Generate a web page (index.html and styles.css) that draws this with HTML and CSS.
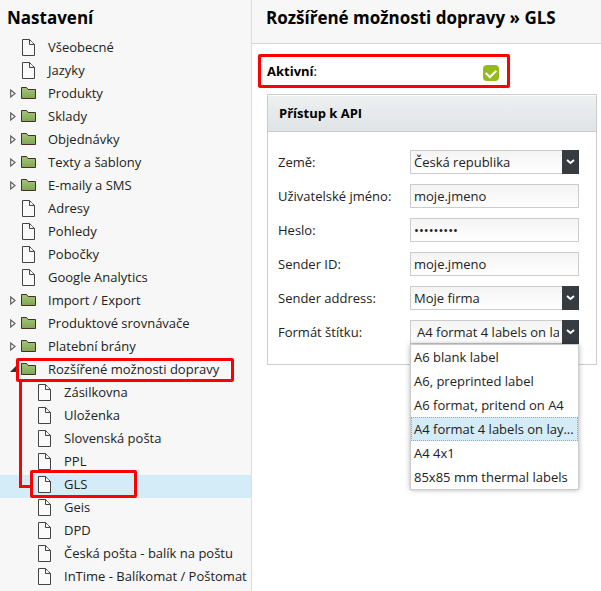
FILE: index.html
```
<!DOCTYPE html>
<html lang="cs">
<head>
<meta charset="utf-8">
<title>Rozšířené možnosti dopravy » GLS</title>
<link rel="stylesheet" href="styles.css">
</head>
<body>
<svg class="sprite" aria-hidden="true">
  <symbol id="file" viewBox="0 0 13 17"><path d="M.5.5h7l5 5v11H.5z" fill="#fafafa" stroke="#444"/><path d="M7.5.5v5h5" fill="none" stroke="#444"/><path d="M9 2.500v1.500h1.500" fill="none" stroke="#fff"/></symbol>
  <symbol id="folder" viewBox="0 0 15 12"><path d="M.5 11.500V.5h5l1.500 2h7.500v9z" fill="url(#green)" stroke="#4b2c2a"/></symbol>
  <symbol id="closed" viewBox="0 0 6 9"><path d="M.7 1v7L5 4.500z" fill="#fff" stroke="#606060" stroke-width="1.200"/></symbol>
  <symbol id="open" viewBox="0 0 6 6"><path d="M6 0v6H0z" fill="#333"/></symbol>
  <symbol id="chevron" viewBox="0 0 9 6"><path d="M1 1l3.500 3L8 1" fill="none" stroke="#fff" stroke-width="2"/></symbol>
  <linearGradient id="green" x2="0" y2="1"><stop stop-color="#a5c57f"/><stop offset="1" stop-color="#7fa650"/></linearGradient>
</svg>
<div class="app">
  <nav class="sidebar">
    <h2 class="title">Nastavení</h2>
    <ul class="tree">
      <li><a class="row" href="#"><span class="toggle"></span><svg class="file"><use href="#file"/></svg><span>Všeobecné</span></a></li>
      <li><a class="row" href="#"><span class="toggle"></span><svg class="file"><use href="#file"/></svg><span>Jazyky</span></a></li>
      <li><a class="row" href="#"><svg class="toggle"><use href="#closed"/></svg><svg class="folder"><use href="#folder"/></svg><span>Produkty</span></a></li>
      <li><a class="row" href="#"><svg class="toggle"><use href="#closed"/></svg><svg class="folder"><use href="#folder"/></svg><span>Sklady</span></a></li>
      <li><a class="row" href="#"><svg class="toggle"><use href="#closed"/></svg><svg class="folder"><use href="#folder"/></svg><span>Objednávky</span></a></li>
      <li><a class="row" href="#"><svg class="toggle"><use href="#closed"/></svg><svg class="folder"><use href="#folder"/></svg><span>Texty a šablony</span></a></li>
      <li><a class="row" href="#"><svg class="toggle"><use href="#closed"/></svg><svg class="folder"><use href="#folder"/></svg><span>E-maily a SMS</span></a></li>
      <li><a class="row" href="#"><span class="toggle"></span><svg class="file"><use href="#file"/></svg><span>Adresy</span></a></li>
      <li><a class="row" href="#"><span class="toggle"></span><svg class="file"><use href="#file"/></svg><span>Pohledy</span></a></li>
      <li><a class="row" href="#"><span class="toggle"></span><svg class="file"><use href="#file"/></svg><span>Pobočky</span></a></li>
      <li><a class="row" href="#"><span class="toggle"></span><svg class="file"><use href="#file"/></svg><span>Google Analytics</span></a></li>
      <li><a class="row" href="#"><svg class="toggle"><use href="#closed"/></svg><svg class="folder"><use href="#folder"/></svg><span>Import / Export</span></a></li>
      <li><a class="row" href="#"><svg class="toggle"><use href="#closed"/></svg><svg class="folder"><use href="#folder"/></svg><span>Produktové srovnávače</span></a></li>
      <li><a class="row" href="#"><svg class="toggle"><use href="#closed"/></svg><svg class="folder"><use href="#folder"/></svg><span>Platební brány</span></a></li>
      <li class="branch">
        <a class="row" href="#"><svg class="toggle opened"><use href="#open"/></svg><svg class="folder"><use href="#folder"/></svg><span>Rozšířené možnosti dopravy</span></a>
        <span class="mark mark-branch"></span>
        <span class="mark-link"></span>
        <ul class="tree nested">
          <li><a class="row" href="#"><span class="toggle"></span><svg class="file"><use href="#file"/></svg><span>Zásilkovna</span></a></li>
          <li><a class="row" href="#"><span class="toggle"></span><svg class="file"><use href="#file"/></svg><span>Uloženka</span></a></li>
          <li><a class="row" href="#"><span class="toggle"></span><svg class="file"><use href="#file"/></svg><span>Slovenská pošta</span></a></li>
          <li><a class="row" href="#"><span class="toggle"></span><svg class="file"><use href="#file"/></svg><span>PPL</span></a></li>
          <li class="current"><a class="row" href="#" aria-current="page"><span class="toggle"></span><svg class="file"><use href="#file"/></svg><span>GLS</span></a><span class="mark mark-leaf"></span></li>
          <li><a class="row" href="#"><span class="toggle"></span><svg class="file"><use href="#file"/></svg><span>Geis</span></a></li>
          <li><a class="row" href="#"><span class="toggle"></span><svg class="file"><use href="#file"/></svg><span>DPD</span></a></li>
          <li><a class="row" href="#"><span class="toggle"></span><svg class="file"><use href="#file"/></svg><span>Česká pošta - balík na poštu</span></a></li>
          <li><a class="row" href="#"><span class="toggle"></span><svg class="file"><use href="#file"/></svg><span>InTime - Balíkomat / Poštomat</span></a></li>
        </ul>
      </li>
    </ul>
  </nav>
  <main class="main">
    <header class="header"><h1 class="title">Rozšířené možnosti dopravy » GLS</h1></header>
    <form class="content">
      <div class="active-row">
        <label for="active"><b>Aktivní</b>:</label>
        <input class="check" type="checkbox" id="active" checked>
      </div>
      <section class="panel">
        <h3 class="panel-title">Přístup k API</h3>
        <div class="fields">
          <label for="country">Země:</label>
          <div class="control"><select class="box" id="country"><option>Česká republika</option></select><span class="arrow"><svg><use href="#chevron"/></svg></span></div>
          <label for="user">Uživatelské jméno:</label>
          <input class="box" id="user" type="text" value="moje.jmeno">
          <label for="pass">Heslo:</label>
          <input class="box" id="pass" type="password" value="heslo1234">
          <label for="sender">Sender ID:</label>
          <input class="box" id="sender" type="text" value="moje.jmeno">
          <label for="address">Sender address:</label>
          <div class="control"><select class="box" id="address"><option>Moje firma</option></select><span class="arrow"><svg><use href="#chevron"/></svg></span></div>
          <label for="format">Formát štítku:</label>
          <div class="control">
            <select class="box editing" id="format"><option>A4 format 4 labels on layout</option></select><span class="arrow"><svg><use href="#chevron"/></svg></span>
            <ul class="menu" role="listbox" aria-label="Formát štítku">
              <li role="option">A6 blank label</li>
              <li role="option">A6, preprinted label</li>
              <li role="option">A6 format, pritend on A4</li>
              <li role="option" class="chosen" aria-selected="true">A4 format 4 labels on lay...</li>
              <li role="option">A4 4x1</li>
              <li role="option">85x85 mm thermal labels</li>
            </ul>
          </div>
        </div>
      </section>
    </form>
  </main>
</div>
</body>
</html>
```
FILE: styles.css
```
* { box-sizing: border-box; }
body {
  margin: 0;
  background: #fff;
  color: #222;
  font: 13px/20px "Open Sans", sans-serif;
}
.sprite { position: absolute; width: 0; height: 0; }
.app { display: flex; min-height: 100vh; }
.sidebar {
  flex: 0 0 252px;
  background: #f7f7f7;
  border-right: 1px solid #ddd;
}
.title {
  margin: 0;
  font-size: 17px;
  line-height: 24px;
  font-weight: 700;
  color: #000;
}
.sidebar .title { padding: 6px 7px 8px; }
.tree { list-style: none; margin: 0; padding: 0; }
.row {
  display: flex;
  align-items: flex-start;
  height: 23px;
  padding-left: 10px;
  color: #222;
  line-height: 18px;
  text-decoration: none;
  white-space: nowrap;
}
.nested .row { padding-left: 26px; }
.toggle { width: 6px; height: 9px; margin: 5px 5px 0 0; flex: none; }
.opened { height: 6px; margin-top: 6px; }
.file { width: 13px; height: 17px; margin: 1px 13px 0 1px; flex: none; }
.folder { width: 15px; height: 12px; margin: 3px 12px 0 0; flex: none; }
.current { position: relative; background: #d4ecf8; }
.branch { position: relative; }

/* Highlight frames drawn over the tree */
.mark { position: absolute; border: 3px solid #f00; border-radius: 2px; pointer-events: none; }
.mark-branch { left: 16px; top: -2px; width: 218px; height: 24px; }
.mark-leaf { left: 30px; top: -5px; width: 107px; height: 28px; }
.mark-link {
  position: absolute;
  z-index: 1;
  left: 19px;
  top: 21px;
  width: 12px;
  height: 107px;
  border: solid #f00;
  border-width: 0 0 3px 3px;
  pointer-events: none;
}

.main { flex: 1; min-width: 0; }
.header {
  padding: 6px 14px 13px;
  background: #f7f7f7;
  border-bottom: 1px solid #d5d5d5;
}
.content { padding: 10px 4px 10px 6px; }
.active-row {
  display: flex;
  justify-content: space-between;
  width: 252px;
  height: 34px;
  padding: 4px 8px 0 6px;
  border: 3px solid #f00;
  border-radius: 2px;
  color: #000;
}
.check {
  appearance: none;
  width: 16px;
  height: 16px;
  margin: 4px 0 0;
  border-radius: 4px;
  background: #95ba1d;
  display: grid;
  place-items: center;
}
.check:checked::before {
  content: "";
  width: 8px;
  height: 5px;
  margin-bottom: 2px;
  border: solid #fff;
  border-width: 0 0 2px 2px;
  transform: rotate(-45deg);
}
.panel { margin: 6px 0 0 9px; border: 1px solid #ccc; }
.panel-title {
  margin: 0;
  padding: 8px 11px;
  font-size: 13px;
  color: #000;
  background: linear-gradient(#eef0f1, #dfe4e6);
  border-bottom: 1px solid #ccc;
  box-shadow: inset 0 1px #fff;
}
.fields {
  display: grid;
  grid-template-columns: 132px 1fr;
  grid-auto-rows: 24px;
  row-gap: 10px;
  align-items: center;
  padding: 18px 17px 20px 10px;
}
.control { position: relative; height: 24px; }
.box {
  display: block;
  appearance: none;
  width: 100%;
  height: 24px;
  margin: 0;
  padding: 0 3px;
  border: 1px solid #ccc;
  border-radius: 0;
  outline: 0;
  background: linear-gradient(#f4f4f4, #fff);
  color: #222;
  font: inherit;
}
select.box { border-right: 17px solid #363c40; }
select.editing { padding-left: 6px; }
.arrow {
  position: absolute;
  top: 0;
  right: 0;
  width: 17px;
  height: 24px;
  background: #363c40;
  display: grid;
  place-items: center;
  pointer-events: none;
}
.arrow svg { width: 9px; height: 6px; }
.menu {
  position: absolute;
  top: 100%;
  left: 0;
  right: 0;
  margin: 0;
  padding: 0;
  list-style: none;
  border: 1px solid #ccc;
  background: #fff;
  box-shadow: 0 0 5px rgba(0, 0, 0, .3);
}
.menu li {
  height: 24px;
  padding: 1px 2px;
  border: 1px solid transparent;
  white-space: nowrap;
}
.menu .chosen { background: #d4ecf8; border: 1px dotted #8ab; }
```
